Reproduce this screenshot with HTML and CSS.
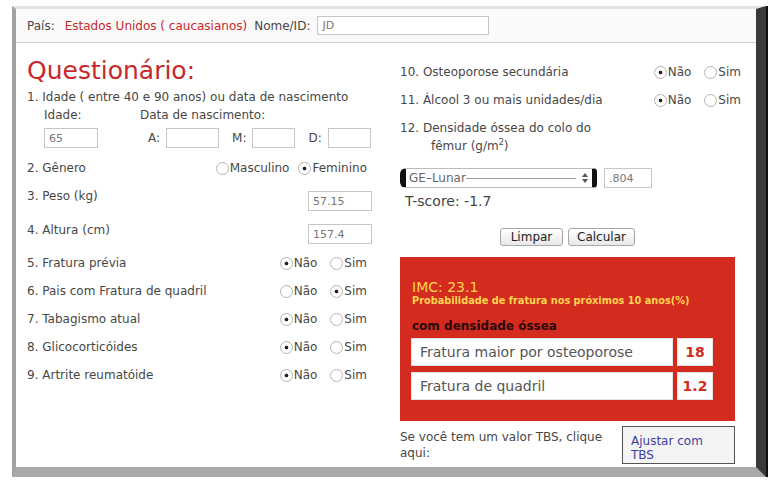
FILE: index.html
```html
<!DOCTYPE html>
<html lang="pt">
<head>
<meta charset="utf-8">
<title>Questionário</title>
<link rel="stylesheet" href="styles.css">
</head>
<body>
<div class="frame">
  <header class="topbar">
    <span class="lbl">País:</span>
    <span class="country">Estados Unidos ( caucasianos)</span>
    <span class="lbl">Nome/ID:</span>
    <input class="field name-field" value="JD" readonly>
  </header>
  <main class="content">
    <section class="col-left">
      <h1 class="title">Questionário:</h1>
      <div class="q1">1. Idade ( entre 40 e 90 anos) ou data de nascimento</div>
      <div class="sublabels"><span class="sub-age">Idade:</span><span>Data de nascimento:</span></div>
      <div class="dob-row">
        <input class="field age" value="65" readonly>
        <span class="dob-group first"><span>A:</span><input class="field yr" readonly></span>
        <span class="dob-group"><span>M:</span><input class="field md" readonly></span>
        <span class="dob-group"><span>D:</span><input class="field md" readonly></span>
      </div>
      <div class="row q-gender">
        <span>2. Gênero</span>
        <span class="opts"><label class="opt"><input type="radio" name="g">Masculino</label><label class="opt"><input type="radio" name="g" checked>Feminino</label></span>
      </div>
      <div class="row q-num q-peso"><span>3. Peso (kg)</span><input class="field num" value="57.15" readonly></div>
      <div class="row q-num q-alt"><span>4. Altura (cm)</span><input class="field num" value="157.4" readonly></div>
      <div class="row q-yn first-yn">
        <span>5. Fratura prévia</span>
        <span class="opts"><label class="opt"><input type="radio" name="q5" checked>Não</label><label class="opt"><input type="radio" name="q5">Sim</label></span>
      </div>
      <div class="row q-yn">
        <span>6. Pais com Fratura de quadril</span>
        <span class="opts"><label class="opt"><input type="radio" name="q6">Não</label><label class="opt"><input type="radio" name="q6" checked>Sim</label></span>
      </div>
      <div class="row q-yn">
        <span>7. Tabagismo atual</span>
        <span class="opts"><label class="opt"><input type="radio" name="q7" checked>Não</label><label class="opt"><input type="radio" name="q7">Sim</label></span>
      </div>
      <div class="row q-yn">
        <span>8. Glicocorticóides</span>
        <span class="opts"><label class="opt"><input type="radio" name="q8" checked>Não</label><label class="opt"><input type="radio" name="q8">Sim</label></span>
      </div>
      <div class="row q-yn">
        <span>9. Artrite reumatóide</span>
        <span class="opts"><label class="opt"><input type="radio" name="q9" checked>Não</label><label class="opt"><input type="radio" name="q9">Sim</label></span>
      </div>
    </section>
    <section class="col-right">
      <div class="row q-yn q10">
        <span>10. Osteoporose secundária</span>
        <span class="opts"><label class="opt"><input type="radio" name="q10" checked>Não</label><label class="opt"><input type="radio" name="q10">Sim</label></span>
      </div>
      <div class="row q-yn">
        <span>11. Álcool 3 ou mais unidades/dia</span>
        <span class="opts"><label class="opt"><input type="radio" name="q11" checked>Não</label><label class="opt"><input type="radio" name="q11">Sim</label></span>
      </div>
      <div class="q12">
        <div>12. Densidade óssea do colo do</div>
        <div class="q12-cont">fêmur (g/m<sup>2</sup>)</div>
      </div>
      <div class="bmd-row">
        <div class="select"><span>GE–Lunar</span><span class="sel-line"></span>
          <svg class="sel-arrows" width="6" height="10" viewBox="0 0 6 10"><path d="M3 0 L6 4 H0 Z M0 6 H6 L3 10 Z" fill="#555"/></svg>
        </div>
        <input class="field bmd" value=".804" readonly>
      </div>
      <div class="tscore">T-score: -1.7</div>
      <div class="buttons"><button class="btn limpar">Limpar</button><button class="btn calcular">Calcular</button></div>
      <div class="result">
        <div class="imc">IMC: 23.1</div>
        <div class="prob">Probabilidade de fratura nos próximos 10 anos(%)</div>
        <div class="withbmd">com densidade óssea</div>
        <div class="res-row"><span class="res-name">Fratura maior por osteoporose</span><span class="res-val">18</span></div>
        <div class="res-row second"><span class="res-name">Fratura de quadril</span><span class="res-val">1.2</span></div>
      </div>
      <div class="tbs">
        <div class="tbs-text">Se você tem um valor TBS, clique aqui:</div>
        <button class="tbs-btn">Ajustar com TBS</button>
      </div>
    </section>
  </main>
</div>
</body>
</html>
```
FILE: styles.css
```css
* { box-sizing: border-box; }
body {
  margin: 0;
  background: #fff;
  font-family: "DejaVu Sans", sans-serif;
  font-size: 12px;
  color: #474747;
}
.frame {
  margin: 6px 0 0 12px;
  width: 754px;
  height: 471px;
  border-style: solid;
  border-width: 3px 10px 10px 4px;
  border-color: #e4e4e4 #3a3a3a #a9a9a9 #a2a2a2;
  box-shadow: 2px 0 0 #111;
  display: flex;
  flex-direction: column;
  background: #fff;
}
.topbar {
  height: 34px;
  flex: none;
  border-bottom: 1px solid #cfcfcf;
  background: #fafafa;
  display: flex;
  align-items: center;
  padding-left: 11px;
}
.country { color: #c8282c; margin-left: 10px; margin-right: 7px; }
.field {
  height: 20px;
  border: 1px solid #c6c6c6;
  padding: 0 4px;
  font: 11px "DejaVu Sans", sans-serif;
  color: #777;
  background: #fff;
  outline: none;
}
.name-field { margin-left: 7px; width: 172px; height: 19px; }
.content { display: flex; padding-left: 11px; gap: 28px; }
.col-left { width: 345px; display: flex; flex-direction: column; }
.col-right { width: 342px; display: flex; flex-direction: column; }
.title {
  margin: 13px 0 0;
  font-size: 25px;
  line-height: 30px;
  font-weight: normal;
  color: #c8282c;
}
.q1 { margin-top: 3px; line-height: 16px; }
.sublabels { display: flex; padding-left: 17px; line-height: 16px; margin-top: 2px; }
.sub-age { width: 96px; }
.dob-row { display: flex; align-items: center; padding-left: 17px; margin-top: 5px; height: 20px; }
.age { width: 54px; }
.yr { width: 53px; }
.md { width: 43px; }
.dob-group { display: flex; align-items: center; gap: 6px; margin-left: 13px; }
.dob-group.first { margin-left: 50px; }
.row { display: flex; justify-content: space-between; align-items: center; }
.q-gender { margin-top: 10px; height: 20px; }
.q-num { align-items: flex-start; line-height: 16px; }
.q-peso { margin-top: 10px; height: 26px; }
.q-peso .field { margin-top: 3px; }
.q-alt { margin-top: 8px; height: 24px; }
.q-alt .field { margin-top: 2px; }
.num { width: 64px; }
.q-yn { height: 28px; }
.first-yn { margin-top: 3px; }
.opts { display: flex; gap: 13px; margin-right: 5px; }
.q-gender .opts { gap: 9px; }
.col-right .opts { margin-right: 1px; }
.opt { display: flex; align-items: center; }
.opt input {
  appearance: none;
  -webkit-appearance: none;
  width: 13px;
  height: 13px;
  margin: 0 1px 0 0;
  border: 1px solid #b4b4b4;
  border-radius: 50%;
  background: #fff;
}
.opt input:checked {
  background: radial-gradient(circle, #222 0 1.5px, transparent 2.2px), #fff;
}
.q10 { margin-top: 15px; }
.q12 { margin-top: 5px; line-height: 18px; }
.q12-cont { padding-left: 31px; }
.q12 sup { font-size: 8px; line-height: 0; vertical-align: 5px; }
.bmd-row { display: flex; gap: 7px; margin-top: 13px; height: 20px; }
.select {
  width: 197px;
  height: 20px;
  display: flex;
  align-items: center;
  border: 1px solid #bdbdbd;
  border-left: 6px solid #111;
  border-right: 5px solid #111;
  border-radius: 6px 4px 4px 6px;
  padding: 0 4px 0 3px;
  color: #666;
  background: #fff;
}
.sel-line { flex: 1; height: 1px; background: #a0a0a0; margin-right: 6px; }
.sel-arrows { flex: none; }
.bmd { width: 48px; }
.tscore { margin-top: 5px; padding-left: 5px; font-size: 14px; line-height: 16px; color: #444; }
.buttons { display: flex; justify-content: center; gap: 5px; margin-top: 19px; width: 335px; }
.btn {
  height: 18px;
  padding: 0;
  font: 12px "DejaVu Sans", sans-serif;
  border: 1px solid #a8a8a8;
  border-radius: 3px;
  background: linear-gradient(#fff, #e8e8e8);
  color: #222;
}
.limpar { width: 63px; }
.calcular { width: 67px; }
.result {
  margin-top: 11px;
  width: 335px;
  height: 164px;
  background: #d42b1f;
  padding: 22px 22px 0 11px;
}
.imc { color: #ffd34e; font-size: 14px; line-height: 16px; padding-left: 1px; }
.prob { color: #ffd34e; font-weight: bold; font-size: 9.75px; line-height: 12px; padding-left: 1px; }
.withbmd { margin-top: 11px; font-weight: bold; color: #2a0808; line-height: 16px; padding-left: 1px; }
.res-row { display: flex; gap: 4px; margin-top: 4px; height: 28px; }
.res-row.second { margin-top: 6px; }
.res-name {
  width: 262px;
  background: #fff;
  border: 1px solid #e4e4e4;
  font-size: 14px;
  color: #555;
  padding-left: 8px;
  display: flex;
  align-items: center;
}
.res-val {
  width: 36px;
  background: #fff;
  border: 1px solid #e4e4e4;
  color: #d42b1f;
  font-weight: bold;
  font-size: 14px;
  display: flex;
  align-items: center;
  justify-content: center;
}
.tbs { display: flex; justify-content: space-between; margin-top: 5px; width: 335px; }
.tbs-text { width: 215px; line-height: 16px; padding-top: 3px; }
.tbs-btn {
  width: 113px;
  height: 38px;
  border: 1px solid #555;
  background: #f4f4f4;
  color: #3e3e9e;
  text-align: left;
  padding: 5px 8px 0;
  font: 12px/14px "DejaVu Sans", sans-serif;
  display: block;
}
```
